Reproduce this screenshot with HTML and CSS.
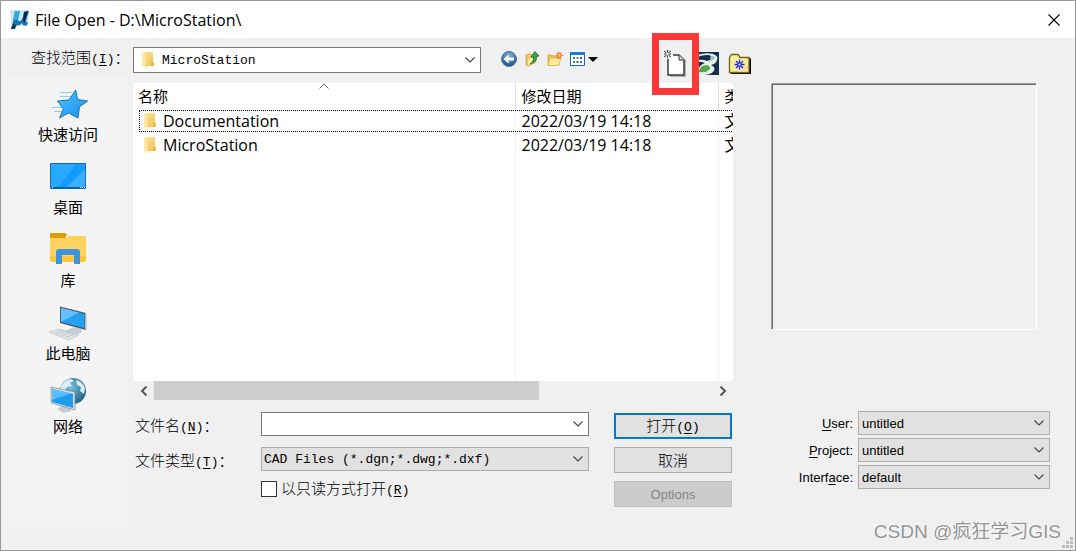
FILE: index.html
```html
<!DOCTYPE html>
<html lang="zh-CN">
<head>
    <meta charset="UTF-8">
    <meta name="viewport" content="width=device-width, initial-scale=1.0">
    <title>File Open</title>
    <link rel="stylesheet" href="styles.css">
</head>
<body>
    <!-- shared icons -->
    <svg class="defs" width="0" height="0" aria-hidden="true">
        <defs>
            <linearGradient id="gold" x1="0" y1="0" x2="1" y2="1">
                <stop offset="0" stop-color="#ffe59c"/>
                <stop offset="1" stop-color="#f0c14f"/>
            </linearGradient>
            <linearGradient id="blue" x1="0" y1="0" x2="1" y2="1">
                <stop offset="0" stop-color="#5cc4ff"/>
                <stop offset="1" stop-color="#0d8fee"/>
            </linearGradient>
            <radialGradient id="globe" cx=".4" cy=".35" r=".7">
                <stop offset="0" stop-color="#7cc0dc"/>
                <stop offset="1" stop-color="#1d6288"/>
            </radialGradient>
            <radialGradient id="ball" cx=".5" cy=".3" r=".7">
                <stop offset="0" stop-color="#86b6dd"/>
                <stop offset="1" stop-color="#15508e"/>
            </radialGradient>
        </defs>
        <symbol id="folder" viewBox="0 0 14 18">
            <path d="M3 1h9v14H3z" fill="url(#gold)"/>
            <path d="M10 11h3v4h-3z" fill="#e9b949"/>
            <path d="M1 1l4 2v14l-4-2z" fill="#ffe8a6"/>
            <path d="M5 3v14" stroke="#f0ca6a" stroke-width=".6"/>
        </symbol>
        <symbol id="chevron" viewBox="0 0 10 6">
            <path d="M.5.5L5 5 9.500.5" fill="none" stroke="#444" stroke-width="1.1"/>
        </symbol>
    </svg>

    <div class="dialog">
        <header class="titlebar">
            <svg width="20" height="20" viewBox="0 0 20 20" aria-hidden="true">
                <path d="M0 0h19L18 16H1z" fill="#c9e8f8"/>
                <path d="M5 1h5L8 9q0 3 2 2 2-1 3-4l1-5 5-1-3 10q0 2 2 1l-1 3q-4 2-5-2-2 3-5 2l-2 4H1l2-7z" fill="#1478ae"/>
                <path d="M5 1h5L8 9l-2 1H3z" fill="#35a8df"/>
                <path d="M14 2l4-1-3 10-1 2-1-3z" fill="#0b2538"/>
                <path d="M3 14l3 1-2 4H1z" fill="#0b2f49"/>
            </svg>
            <h1>File Open - D:\MicroStation\</h1>
            <button type="button" class="close" aria-label="Close">
                <svg width="12" height="12" viewBox="0 0 12 12"><path d="M.5.5l11 11M11.500.5l-11 11" stroke="#000" stroke-width="1.1"/></svg>
            </button>
        </header>

        <div class="toolbar">
            <label for="lookin" class="song">查找范围<span class="key">(<u>I</u>)</span>：</label>
            <div class="combo lookin">
                <svg width="14" height="18"><use href="#folder"/></svg>
                <select id="lookin" class="mono"><option>MicroStation</option></select>
                <svg class="arrow" width="10" height="6"><use href="#chevron"/></svg>
            </div>
            <div class="nav">
                <button type="button" aria-label="Back">
                    <svg width="16" height="16" viewBox="0 0 16 16">
                        <circle cx="8" cy="8" r="7.500" fill="url(#ball)" stroke="#5b7594"/>
                        <path d="M2.500 8l5-4.500v3H13v3H7.500v3z" fill="#fff"/>
                    </svg>
                </button>
                <button type="button" aria-label="Up">
                    <svg width="16" height="16" viewBox="0 0 16 16">
                        <path d="M2 4l4-1 1 1 5-1v8l-8 4-2-1z" fill="#f1cd66" stroke="#c69a2c" stroke-width=".7"/>
                        <path d="M4 7l8-2-1 7-8 3z" fill="#ffe99d" stroke="#d2a93b" stroke-width=".6"/>
                        <path d="M6 13q4-2 3.500-7H7l4-5.500L15 5l-2.500.5Q13 11 6 13z" fill="#35a844" stroke="#126a25" stroke-width=".8"/>
                    </svg>
                </button>
                <button type="button" aria-label="New folder">
                    <svg width="16" height="16" viewBox="0 0 16 16">
                        <path d="M1 4h4l1 1h6v9H1z" fill="#edc65b" stroke="#c89a31" stroke-width=".7"/>
                        <path d="M3 7h11l-2.500 7.500H1z" fill="#ffe999" stroke="#d6ab41" stroke-width=".7"/>
                        <path d="M12 1v7M9 4.500h7M10 2l4.500 5M14.500 2L10 7" stroke="#f26a30" stroke-width="1.200"/>
                        <circle cx="12.200" cy="4.500" r="1.300" fill="#ffe05a"/>
                    </svg>
                </button>
                <button type="button" class="views" aria-label="Views">
                    <svg width="28" height="16" viewBox="0 0 28 16">
                        <path d="M.5 1.500h14v13H.5z" fill="#fff" stroke="#1664c0"/>
                        <path d="M0 1h15v3H0z" fill="#1e78dc"/>
                        <path d="M3 6h2v2H3zM10 10h2v2h-2z" fill="#3b6fd0"/>
                        <path d="M6.500 6h2v2h-2zM3 10h2v2H3z" fill="#4e9a68"/>
                        <path d="M10 6h2v2h-2zM6.500 10h2v2h-2z" fill="#444d8a"/>
                        <path d="M18 6h10l-5 5z" fill="#000"/>
                    </svg>
                </button>
            </div>
            <div class="tools">
                <button type="button" class="marked" aria-label="New file">
                    <svg width="24" height="28" viewBox="0 0 24 28">
                        <path d="M6 10h16v17H6z" fill="#777" opacity=".5"/>
                        <path d="M4 9V25h16V10l-5-5H8z" fill="#fff"/>
                        <path d="M4 9v16h16V10l-5-5H9" fill="none" stroke="#3a3a3a" stroke-width="1.500"/>
                        <path d="M15 5v5h5" fill="#ddd" stroke="#333"/>
                        <path d="M0 1l2 1.500M7 1L5 2.500M0 7l2-1.500M7 7L5 5.500M3.500 0v2M3.500 6v2M0 4h1.500M5.500 4H7" stroke="#222" stroke-width=".9"/>
                        <circle cx="3.500" cy="4" r="1.700" fill="#fff" stroke="#555" stroke-width=".8"/>
                    </svg>
                </button>
                <button type="button" aria-label="Bentley">
                    <svg width="22" height="24" viewBox="0 0 22 24">
                        <path d="M0 0h22v23H0z" fill="#12304c"/>
                        <path d="M0 3Q9 0 16 2q6 2 4 6-1 4-6 5 6 3 2 7-3 3-10 3H0v-3q2-7 8-9Q3 9 0 10z" fill="#e8f1ed"/>
                        <path d="M3 4q9-2 11 0 3 3-4 5Q6 7 0 8V6z" fill="#12304c"/>
                        <path d="M2 19q1-6 8-6 5 2 2 5-3 3-10 2z" fill="#54a64b"/>
                        <path d="M13 5q3-2 5 0-1 4-7 5 3-2 2-5z" fill="#a6bfba"/>
                    </svg>
                </button>
                <button type="button" aria-label="Project folder">
                    <svg width="24" height="22" viewBox="0 0 24 22">
                        <path d="M2 4l2-2h7l2 3h9l1 1v15H3z" fill="#000"/>
                        <path d="M1.500 4.500l2-3H10l2 3h9V19.500H1.500z" fill="#f9ee9b" stroke="#6c6518" stroke-width="1.300"/>
                        <path d="M13 13h7v5.500h-9z" fill="#ffdca0"/>
                        <path d="M11.500 6.500v10M6.500 11.500h10M8 8l7 7M15 8l-7 7" stroke="#1d25e8" stroke-width="1.300"/>
                        <circle cx="11.500" cy="11.500" r="1" fill="#fff"/>
                    </svg>
                </button>
            </div>
        </div>

        <div class="body">
            <nav class="places">
                <a href="#">
                    <svg width="40" height="36" viewBox="0 0 40 36">
                        <path d="M12 6.500h12M12 10.500h11M4 21.500h10M6 25.500h8" stroke="#8bcdf5"/>
                        <path d="M27.700 4l1.800 9.500L39.700 15l-8.200 5.700L30 32l-9.500-5-9 5 3.800-9L9.500 15 21 14z" fill="url(#blue)" stroke="#1479bd"/>
                    </svg>
                    快速访问
                </a>
                <a href="#">
                    <svg width="40" height="36" viewBox="0 0 40 36">
                        <path d="M2.500 4.500h35v25h-35z" fill="#109bfd" stroke="#0a6fb8"/>
                        <path d="M3 5h25L11 28H3z" fill="#29a8ff"/>
                        <path d="M37 10v18H19z" fill="#3caeff"/>
                        <path d="M3 28.500h34" stroke="#075fa0"/>
                        <path d="M4 28.500h1M32 28.500h1M34 28.500h1M36 28.500h1" stroke="#fff"/>
                    </svg>
                    桌面
                </a>
                <a href="#">
                    <svg width="40" height="36" viewBox="0 0 40 36">
                        <path d="M2 6h16l3-2h15q2 0 2 2v22q0 2-2 2H4q-2 0-2-2z" fill="#ffd25f"/>
                        <path d="M2 24h36v4q0 2-2 2H4q-2 0-2-2z" fill="#fbc53c"/>
                        <path d="M2 1h14q2 0 3 2l-2 3H2z" fill="#e09c04"/>
                        <path d="M8 32V20q0-3 3-3h18q3 0 3 3v12h-6v-9H14v9z" fill="#3d94dc"/>
                    </svg>
                    库
                </a>
                <a href="#">
                    <svg width="40" height="36" viewBox="0 0 40 36">
                        <path d="M17 26l9-4 8 2-1 4-8 2z" fill="#c5ced4"/>
                        <path d="M12 1.500l26 6.500v17l-26-7z" fill="#4a5963"/>
                        <path d="M37 8l1.500.5V25l-1.500-.5z" fill="#adb8c0"/>
                        <path d="M13 3l23.500 6v14L13 17z" fill="#259ff2"/>
                        <path d="M13 3l18 4.500L13 17z" fill="#62c1ff"/>
                        <path d="M1 27l10-3 20 6-10 5z" fill="#e3e7e9" stroke="#a5afb4" stroke-width=".5"/>
                        <path d="M5 27l18 5.500M8 26l18 5M11 25l17 5M8 29.500l8-4M13 31l8-4M18 32.500l7-3.500" stroke="#b4bcc1" stroke-width=".5"/>
                    </svg>
                    此电脑
                </a>
                <a href="#">
                    <svg width="40" height="36" viewBox="0 0 40 36">
                        <circle cx="25" cy="13" r="13" fill="url(#globe)"/>
                        <path d="M13 8q4-7 10-7l3 2-4 2 2 3-5 1-3 5-4-1zM28 2q7 2 9 8l-1 6-4-3 1-4-4-2z" fill="#d5edf3"/>
                        <path d="M9 31l7-4 7 3v3l-7 2z" fill="#c6ced3"/>
                        <path d="M3 9l24 5v18L3 25z" fill="#d2dce2" stroke="#71818c" stroke-width=".6"/>
                        <path d="M4 11l21 5v14L4 24z" fill="#219bee"/>
                        <path d="M4 11l19 4.500L4 22z" fill="#58bcff"/>
                    </svg>
                    网络
                </a>
            </nav>

            <main class="main">
                <div class="files">
                    <table>
                        <thead>
                            <tr><th class="name">名称<svg class="sort" width="10" height="6" viewBox="0 0 10 6"><path d="M.5 5.500L5 1l4.500 4.500" fill="none" stroke="#666"/></svg></th><th class="date">修改日期</th><th>类型</th></tr>
                        </thead>
                        <tbody>
                            <tr class="focused"><td><svg width="14" height="18"><use href="#folder"/></svg>Documentation</td><td>2022/03/19 14:18</td><td>文件夹</td></tr>
                            <tr><td><svg width="14" height="18"><use href="#folder"/></svg>MicroStation</td><td>2022/03/19 14:18</td><td>文件夹</td></tr>
                            <tr class="rest"><td></td><td></td><td></td></tr>
                        </tbody>
                    </table>
                </div>
                <div class="scrollbar">
                    <button type="button" aria-label="Scroll left"><svg width="8" height="10" viewBox="0 0 8 10"><path d="M6.500.5L2 5l4.500 4.500" fill="none" stroke="#555" stroke-width="2"/></svg></button>
                    <div class="track"><div class="thumb"></div></div>
                    <button type="button" aria-label="Scroll right"><svg width="8" height="10" viewBox="0 0 8 10"><path d="M1.500.5L6 5 1.500 9.500" fill="none" stroke="#555" stroke-width="2"/></svg></button>
                </div>

                <form class="open-form">
                    <div class="fields">
                        <label for="filename" class="song">文件名<span class="key">(<u>N</u>)</span>：</label>
                        <div class="combo">
                            <input type="text" id="filename" class="mono">
                            <svg class="arrow" width="10" height="6"><use href="#chevron"/></svg>
                        </div>
                        <label for="filetype" class="song">文件类型<span class="key">(<u>T</u>)</span>：</label>
                        <div class="combo gray">
                            <select id="filetype" class="mono"><option>CAD Files (*.dgn;*.dwg;*.dxf)</option></select>
                            <svg class="arrow" width="10" height="6"><use href="#chevron"/></svg>
                        </div>
                        <div class="readonly">
                            <input type="checkbox" id="readonly">
                            <label for="readonly" class="song">以只读方式打开<span class="key">(<u>R</u>)</span></label>
                        </div>
                    </div>
                    <div class="buttons">
                        <button type="submit" class="btn primary song">打开<span class="key">(<u>O</u>)</span></button>
                        <button type="button" class="btn song">取消</button>
                        <button type="button" class="btn options" disabled>Options</button>
                    </div>
                </form>
            </main>

            <aside class="side">
                <div class="preview"></div>
                <div class="settings">
                    <label for="user"><u>U</u>ser:</label>
                    <div class="combo gray">
                        <select id="user"><option>untitled</option></select>
                        <svg class="arrow" width="10" height="6"><use href="#chevron"/></svg>
                    </div>
                    <label for="project"><u>P</u>roject:</label>
                    <div class="combo gray">
                        <select id="project"><option>untitled</option></select>
                        <svg class="arrow" width="10" height="6"><use href="#chevron"/></svg>
                    </div>
                    <label for="interface">Interf<u>a</u>ce:</label>
                    <div class="combo gray">
                        <select id="interface"><option>default</option></select>
                        <svg class="arrow" width="10" height="6"><use href="#chevron"/></svg>
                    </div>
                </div>
            </aside>
        </div>

        <div class="watermark">CSDN @疯狂学习GIS</div>
        <svg class="grip" width="11" height="11" viewBox="0 0 11 11" aria-hidden="true">
            <path d="M8 0h3v3H8zM4 4h3v3H4zM8 4h3v3H8zM0 8h3v3H0zM4 8h3v3H4zM8 8h3v3H8z" fill="#bcbcbc"/>
        </svg>
    </div>
</body>
</html>
```
FILE: styles.css
```css
*{
    box-sizing: border-box;
}
body{
    margin: 0;
    background: #f0f0f0;
    color: #000;
    font-family: "Open Sans", "Noto Sans CJK SC", sans-serif;
    font-size: 15px;
}
svg{
    display: block;
    flex: none;
}
.defs{
    position: absolute;
}
button{
    padding: 0;
    border: 0;
    background: none;
    color: inherit;
}
u{
    text-underline-offset: 2px;
}
.dialog{
    position: relative;
    display: flex;
    flex-direction: column;
    min-height: 100vh;
    border: 1px solid #999;
    background: #f0f0f0;
}

/* title bar */
.titlebar{
    display: flex;
    align-items: center;
    gap: 5px;
    height: 37px;
    padding: 0 15px 0 9px;
    background: #fff;
}
.titlebar h1{
    flex: 1;
    margin: 0;
    font-size: 16px;
    font-weight: normal;
    line-height: 20px;
}

/* fonts of the old common dialog */
.song{
    font-family: "Noto Sans CJK SC", sans-serif;
    font-size: 15px;
    font-weight: 300;
    line-height: 20px;
    white-space: nowrap;
}
.mono, .key{
    font-family: "Liberation Mono", monospace;
    font-size: 13px;
}

/* drop-downs */
.combo{
    position: relative;
    display: flex;
    align-items: center;
    height: 24px;
    border: 1px solid #7a7a7a;
    background: #fff;
}
.combo.gray{
    border-color: #adadad;
    background: #e1e1e1;
}
.combo select, .combo input{
    appearance: none;
    flex: 1;
    min-width: 0;
    height: 100%;
    padding: 0 24px 0 2px;
    border: 0;
    outline: 0;
    background: transparent;
    color: #000;
}
.arrow{
    position: absolute;
    right: 5px;
    top: 50%;
    margin-top: -3px;
    pointer-events: none;
}

/* top row */
.toolbar{
    display: flex;
    align-items: center;
    height: 40px;
    padding: 4px 319px 0 30px;
}
.toolbar label{
    width: 102px;
    padding-bottom: 3px;
}
.lookin{
    flex: 1;
    height: 26px;
    padding-left: 7px;
}
.lookin select{
    padding-left: 7px;
}
.nav{
    display: flex;
    margin: 0 58px 0 16px;
    padding-bottom: 3px;
}
.nav button, .tools button{
    display: flex;
    align-items: center;
    justify-content: center;
    width: 23px;
    height: 32px;
}
.nav .views{
    width: 36px;
}
.tools{
    display: flex;
    padding-top: 7px;
}
.tools button{
    position: relative;
    width: 32px;
}
.tools .marked::after{
    content: "";
    position: absolute;
    z-index: 1;
    inset: -15px -7px -15px -8px;
    border: 7px solid #fb3838;
}

/* columns */
.body{
    flex: 1;
    display: flex;
    padding: 0 25px 22px 8px;
}
.places{
    display: flex;
    flex-direction: column;
    gap: 15px;
    width: 118px;
    margin-right: 6px;
    padding-top: 8px;
    background: #f4f4f4;
}
.places a{
    display: flex;
    flex-direction: column;
    align-items: center;
    gap: 2px;
    color: #000;
    line-height: 20px;
    text-decoration: none;
}
.main{
    flex: 1;
    display: flex;
    flex-direction: column;
    min-width: 0;
    padding: 5px 0 21px;
}

/* file list */
.files{
    flex: 1;
    display: flex;
    overflow: hidden;
    padding-left: 5px;
    background: #fff;
}
table{
    flex: none;
    width: 869px;
    table-layout: fixed;
    border-collapse: collapse;
}
th, td{
    height: 24px;
    padding: 0 0 0 6px;
    border-left: 1px solid #e8f1fb;
    font-weight: normal;
    line-height: 20px;
    text-align: left;
}
th{
    position: relative;
    height: 26px;
    border-color: #e0e0e0;
}
td{
    font-size: 16px;
}
th:first-child, td:first-child{
    padding-left: 0;
    border-left: 0;
}
.name{
    width: 377px;
}
.date{
    width: 203px;
}
.sort{
    position: absolute;
    left: 48%;
    top: 0;
}
td svg{
    float: left;
    margin: 1px 6px 0 5px;
}
.focused{
    outline: 1px dotted #000;
    outline-offset: -2px;
}
.rest td{
    height: auto;
}
.scrollbar{
    display: flex;
    height: 19px;
}
.scrollbar button{
    display: flex;
    align-items: center;
    justify-content: center;
    width: 21px;
}
.track{
    flex: 1;
}
.thumb{
    width: 69%;
    height: 100%;
    background: #cdcdcd;
}

/* name, type and buttons */
.open-form{
    display: flex;
    gap: 25px;
    margin-top: 12px;
    padding: 0 1px 0 2px;
}
.fields{
    flex: 1;
    display: grid;
    grid-template-columns: 126px 1fr;
    grid-template-rows: 24px 24px 14px;
    row-gap: 11px;
    align-items: center;
    align-content: start;
}
.fields > label{
    padding-top: 4px;
}
.readonly{
    grid-column: 2;
    display: flex;
    align-items: center;
    gap: 4px;
    height: 16px;
}
.readonly input{
    appearance: none;
    width: 16px;
    height: 16px;
    margin: 0;
    border: 1px solid #333;
    background: #fff;
}
.buttons{
    display: flex;
    flex-direction: column;
    gap: 8px;
    width: 118px;
    padding-top: 1px;
}
.btn{
    height: 26px;
    border: 1px solid #adadad;
    background: #e1e1e1;
}
.btn.primary{
    border: 2px solid #0078d7;
}
.options{
    border-color: #bfbfbf;
    background: #ccc;
    color: #838383;
    font: 13px "Liberation Sans", sans-serif;
}

/* preview and workspace settings */
.side{
    display: flex;
    flex-direction: column;
    width: 279px;
    margin-left: 38px;
    padding: 5px 0 39px;
}
.preview{
    flex: 1;
    margin: 0 13px 81px 0;
    border: 1px solid #fff;
    border-top-color: #a0a0a0;
    border-left-color: #a0a0a0;
    box-shadow: inset 1px 1px 0 #696969;
}
.settings{
    display: grid;
    grid-template-columns: 1fr 192px;
    gap: 3px 5px;
    align-items: center;
    font: 13px "Liberation Sans", sans-serif;
    text-align: right;
}
.settings select{
    font: inherit;
    padding-left: 3px;
}

.watermark{
    position: absolute;
    right: 14px;
    bottom: 4px;
    color: #959595;
    font: 19px/28px "Liberation Sans", "Noto Sans CJK SC", sans-serif;
    text-shadow: -1px -1px 0 #fff;
    pointer-events: none;
}
.grip{
    position: absolute;
    right: 2px;
    bottom: 2px;
}
```
